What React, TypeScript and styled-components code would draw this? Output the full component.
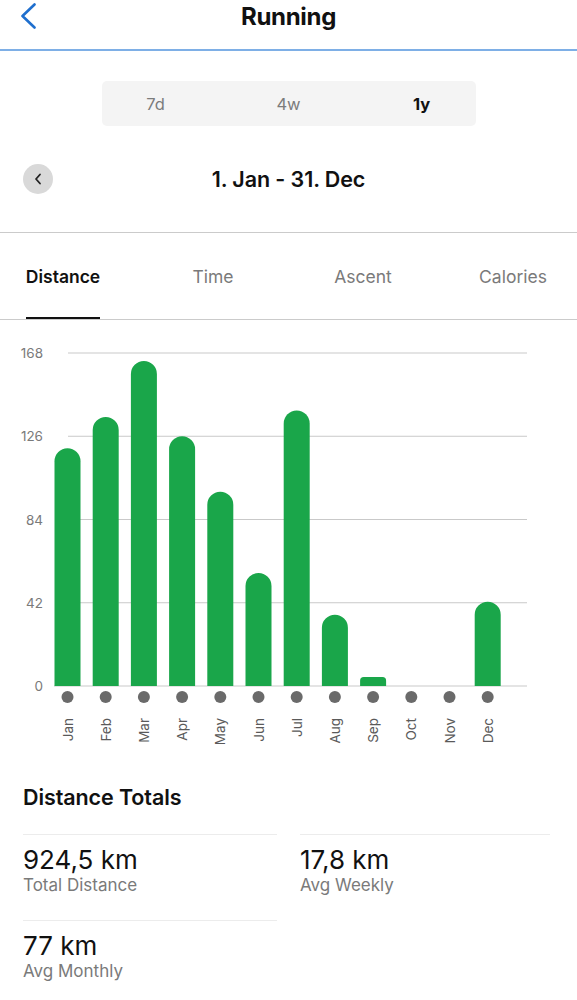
import React from "react";
import styled, { createGlobalStyle } from "styled-components";

const GlobalStyle = createGlobalStyle`
  html, body { margin: 0; padding: 0; background: #ffffff; }
  body { font-family: Inter, "Noto Sans", "Liberation Sans", sans-serif; color: #111; }
  * { box-sizing: border-box; }
`;

const Page = styled.div`
  width: 577px;
  background: #fff;
`;

const Header = styled.header`
  height: 51px;
  border-bottom: 2px solid #7eafe6;
  display: grid;
  grid-template-columns: 60px 1fr 60px;
  align-items: start;
`;

const BackButton = styled.button`
  border: 0;
  background: none;
  padding: 3px 0 0 20px;
  height: 30px;
  display: flex;
  align-items: flex-start;
  cursor: pointer;
`;

const Title = styled.h1`
  margin: 0;
  font-size: 24px;
  font-weight: 700;
  line-height: 34px;
  text-align: center;
  letter-spacing: -0.3px;
`;

const PeriodSection = styled.section`
  padding: 30px 0 38px;
  border-bottom: 1px solid #cbcbcb;
`;

const Segmented = styled.div`
  width: 374px;
  height: 45px;
  margin: 0 auto;
  background: #f4f4f4;
  border-radius: 5px;
  display: flex;
  justify-content: space-between;
  align-items: center;
`;

const Segment = styled.div<{ $active?: boolean }>`
  width: 108px;
  text-align: center;
  font-size: 16.5px;
  font-weight: ${(p) => (p.$active ? 700 : 400)};
  color: ${(p) => (p.$active ? "#111" : "#7c7c7c")};
`;

const DateRow = styled.div`
  margin-top: 38px;
  height: 30px;
  display: grid;
  grid-template-columns: 1fr auto 1fr;
  align-items: center;
`;

const RoundButton = styled.button`
  margin-left: 23px;
  width: 30px;
  height: 30px;
  border-radius: 50%;
  border: 0;
  background: #d9d9d9;
  display: flex;
  align-items: center;
  justify-content: center;
  padding: 0;
  justify-self: start;
`;

const DateTitle = styled.div`
  font-size: 21.5px;
  font-weight: 600;
  letter-spacing: -0.1px;
`;

const TabBar = styled.nav`
  display: grid;
  grid-template-columns: repeat(4, 150px);
  margin-left: -12px;
  height: 87px;
  border-bottom: 1px solid #cbcbcb;
  width: 589px;
`;

const Tab = styled.div`
  display: flex;
  justify-content: center;
`;

const TabLabel = styled.span<{ $active?: boolean }>`
  display: flex;
  align-items: center;
  padding-top: 2px;
  font-size: 17.5px;
  font-weight: ${(p) => (p.$active ? 600 : 400)};
  color: ${(p) => (p.$active ? "#111" : "#7a7a7a")};
  border-bottom: 2px solid ${(p) => (p.$active ? "#111" : "transparent")};
`;

const ChartSvg = styled.svg`
  display: block;
  font-family: Inter, "Noto Sans", "Liberation Sans", sans-serif;
`;

const Totals = styled.section`
  padding: 24px 23px 0;
`;

const TotalsHeading = styled.h2`
  margin: 0 0 24px;
  font-size: 21.5px;
  line-height: 26px;
  font-weight: 600;
  letter-spacing: -0.1px;
`;

const StatGrid = styled.div`
  display: grid;
  grid-template-columns: 254px 250px;
  column-gap: 23px;
`;

const StatCell = styled.div`
  border-top: 1px solid #ececec;
  padding: 9px 0 24px;
`;

const StatValue = styled.div`
  font-size: 26px;
  line-height: 31px;
  color: #111;
`;

const StatLabel = styled.div`
  font-size: 17px;
  line-height: 21px;
  color: #7a7a7a;
`;

const months = ["Jan", "Feb", "Mar", "Apr", "May", "Jun", "Jul", "Aug", "Sep", "Oct", "Nov", "Dec"];
const values = [120, 135.7, 164, 126, 98, 57, 139, 36, 4.5, 0, 0, 42.5];

const BASE = 366;
const TOP = 33;
const SCALE = (BASE - TOP) / 168;

function barPath(cx: number, v: number) {
  const w = 26;
  const h = v * SCALE;
  const x0 = cx - w / 2;
  const y = BASE - h;
  const r = Math.min(13, h * 0.4);
  return `M${x0},${BASE} V${y + r} A${r},${r} 0 0 1 ${x0 + r},${y} H${x0 + w - r} A${r},${r} 0 0 1 ${x0 + w},${y + r} V${BASE} Z`;
}

function Chart() {
  const ticks = [168, 126, 84, 42, 0];
  return (
    <ChartSvg width={577} height={440} viewBox="0 0 577 440">
      {ticks.map((t) => {
        const y = BASE - t * SCALE;
        return (
          <g key={t}>
            <line x1={t === 0 ? 54 : 68} x2={527} y1={y} y2={y} stroke="#c9c9c9" strokeWidth={1.2} />
            <text x={43} y={y} textAnchor="end" dominantBaseline="central" fontSize={13.5} fill="#7a7a7a">
              {t}
            </text>
          </g>
        );
      })}
      {values.map((v, i) => {
        const cx = 67.5 + i * 38.2;
        return (
          <g key={months[i]}>
            {v > 0 && <path d={barPath(cx, v)} fill="#1aa64a" />}
            <circle cx={cx} cy={377} r={6} fill="#6a6a6a" />
            <text
              transform={`translate(${cx}, 398) rotate(-90)`}
              textAnchor="end"
              dominantBaseline="central"
              fontSize={13.5}
              fill="#5a5a5a"
            >
              {months[i]}
            </text>
          </g>
        );
      })}
    </ChartSvg>
  );
}

export default function App() {
  return (
    <Page>
      <GlobalStyle />
      <Header>
        <BackButton aria-label="Back">
          <svg width="17" height="26" viewBox="0 0 17 26">
            <polyline points="14.5,1.5 2.5,13 14.5,24.5" fill="none" stroke="#1f6fce" strokeWidth="2.6" strokeLinecap="round" strokeLinejoin="round" />
          </svg>
        </BackButton>
        <Title>Running</Title>
        <div />
      </Header>
      <PeriodSection>
        <Segmented>
          <Segment>7d</Segment>
          <Segment>4w</Segment>
          <Segment $active>1y</Segment>
        </Segmented>
        <DateRow>
          <RoundButton aria-label="Previous">
            <svg width="8" height="12" viewBox="0 0 8 12">
              <polyline points="6,1.5 2,6 6,10.5" fill="none" stroke="#222" strokeWidth="1.8" strokeLinecap="round" strokeLinejoin="round" />
            </svg>
          </RoundButton>
          <DateTitle>1. Jan - 31. Dec</DateTitle>
          <div />
        </DateRow>
      </PeriodSection>
      <TabBar>
        <Tab><TabLabel $active>Distance</TabLabel></Tab>
        <Tab><TabLabel>Time</TabLabel></Tab>
        <Tab><TabLabel>Ascent</TabLabel></Tab>
        <Tab><TabLabel>Calories</TabLabel></Tab>
      </TabBar>
      <Chart />
      <Totals>
        <TotalsHeading>Distance Totals</TotalsHeading>
        <StatGrid>
          <StatCell>
            <StatValue>924,5 km</StatValue>
            <StatLabel>Total Distance</StatLabel>
          </StatCell>
          <StatCell>
            <StatValue>17,8 km</StatValue>
            <StatLabel>Avg Weekly</StatLabel>
          </StatCell>
          <StatCell>
            <StatValue>77 km</StatValue>
            <StatLabel>Avg Monthly</StatLabel>
          </StatCell>
        </StatGrid>
      </Totals>
    </Page>
  );
}
